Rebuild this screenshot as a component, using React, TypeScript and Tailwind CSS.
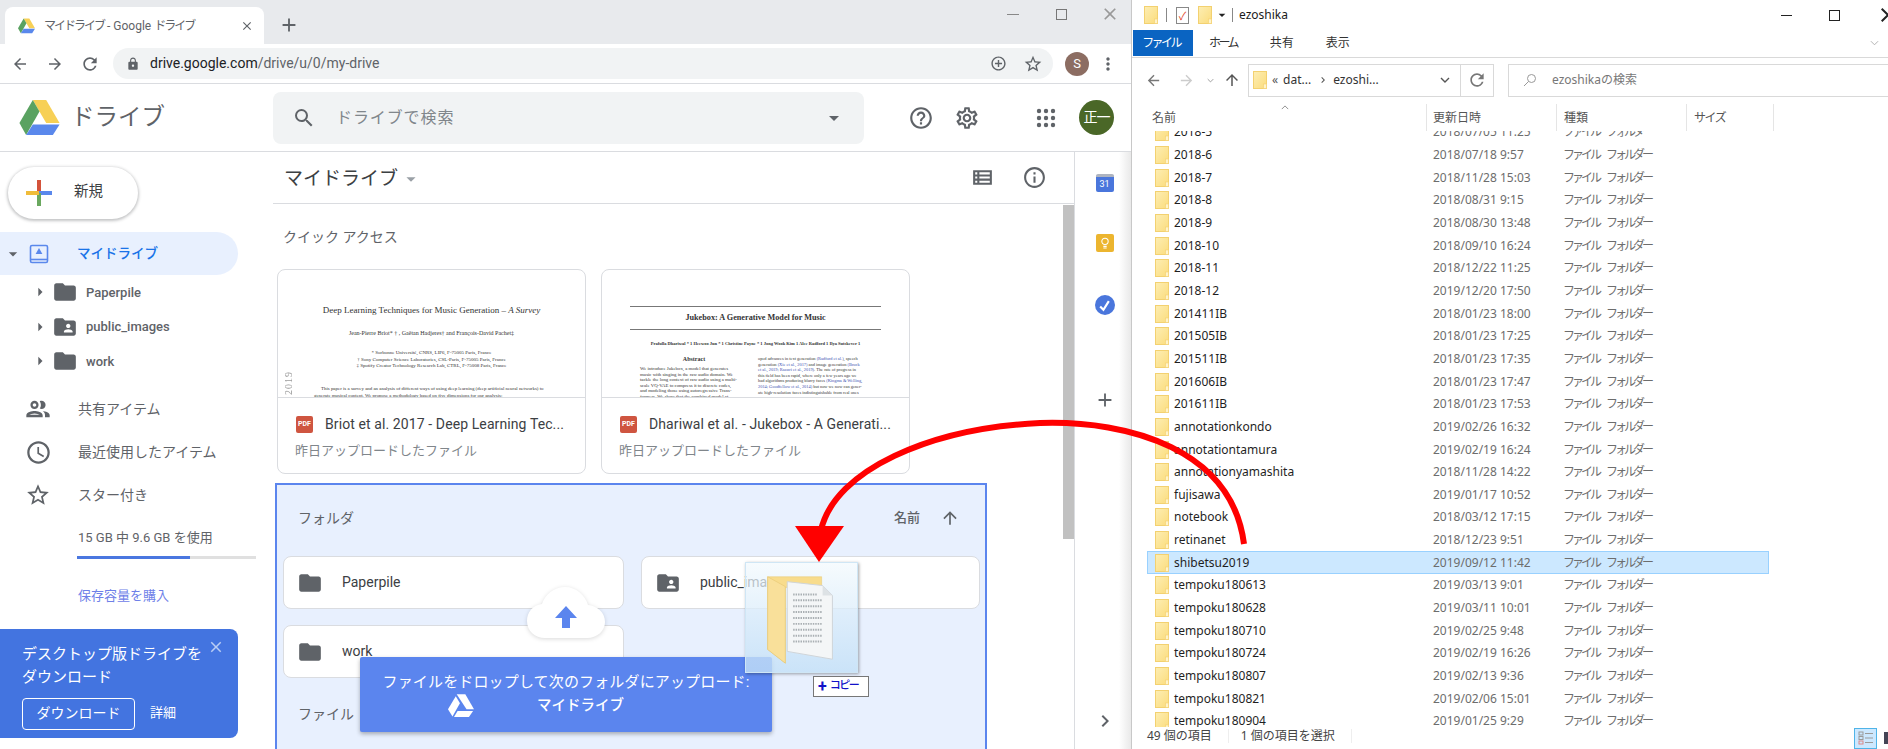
import React from "react";
import {
  MdAdd, MdAddCircleOutline, MdArrowBack, MdArrowDropDown, MdArrowForward, MdArrowRight, MdArrowUpward,
  MdClose, MdFolder, MdFolderShared, MdHelpOutline, MdInfoOutline, MdKeyboardArrowRight, MdLock, MdMoreVert, MdOutlineAccessTime,
  MdOutlinePeople, MdOutlineSettings, MdOutlineViewList, MdRefresh, MdSearch, MdStarBorder,
} from "react-icons/md";

function DriveLogo({ className = "", mono = false }: { className?: string; mono?: boolean }) {
  if (mono) {
    return (
      <svg viewBox="0 0 87 78" className={className} fill="#fff">
        <polygon points="29,0 58,0 87,50 62,50" />
        <polygon points="26,6 40,30 15,74 0,50" />
        <polygon points="32,56 84,56 70,76 20,76" />
      </svg>
    );
  }
  return (
    <svg viewBox="0 0 87 78" className={className}>
      <polygon points="29,0 58,0 87,50 58,50" fill="#f7d056" />
      <polygon points="29,0 43.5,25 14.5,76 0,50" fill="#5aa261" />
      <polygon points="29,53 87,53 72.5,76 14.5,76" fill="#5a88ec" />
    </svg>
  );
}

function PdfIcon() {
  return (
    <div className="w-[17px] h-[17px] rounded-[2px] bg-[#cf5540] flex items-center justify-center text-white text-[7px] font-bold leading-none">
      PDF
    </div>
  );
}

function Card({ children, title }: { children: React.ReactNode; title: string }) {
  return (
    <div className="w-[309px] h-[205px] bg-white border border-[#dadce0] rounded-[8px] overflow-hidden flex flex-col">
      <div className="h-[128px] border-b border-[#dadce0] overflow-hidden text-[#333] [font-family:'Liberation_Serif',serif]">{children}</div>
      <div className="flex items-center mt-[17px] pl-[18px]">
        <PdfIcon />
        <span className="ml-[12px] text-[14px] leading-[18px] text-[#3c4043] tracking-[0.1px] whitespace-nowrap">{title}</span>
      </div>
      <div className="mt-[9px] pl-[17px] text-[13px] leading-[18px] text-[#80868b]">昨日アップロードしたファイル</div>
    </div>
  );
}

function FolderCard({ name, shared, className = "" }: { name: string; shared?: boolean; className?: string }) {
  const Icon = shared ? MdFolderShared : MdFolder;
  return (
    <div className={"h-[53px] bg-white border border-[#dadce0] rounded-[8px] flex items-center pl-[13px] " + className}>
      <Icon className="text-[#5f6368] w-[26px] h-[26px]" />
      <span className="ml-[19px] text-[14px] text-[#3c4043]">{name}</span>
    </div>
  );
}

function TreeRow({ name, shared }: { name: string; shared?: boolean }) {
  const Icon = shared ? MdFolderShared : MdFolder;
  return (
    <div className="h-[34.5px] flex items-center pl-[30px]">
      <MdArrowRight className="text-[#5f6368] w-[20px] h-[20px]" />
      <Icon className="text-[#5f6368] w-[26px] h-[26px] ml-[2px]" />
      <span className="ml-[8px] text-[13px] font-medium text-[#5f6368]">{name}</span>
    </div>
  );
}

function NavRow({ icon, label }: { icon: React.ReactNode; label: string }) {
  return (
    <div className="h-[43px] flex items-center">
      <div className="w-[78px] flex justify-center pr-[2px]">{icon}</div>
      <span className="text-[14px] text-[#5f6368]">{label}</span>
    </div>
  );
}

function ExFolder() {
  return (
    <svg viewBox="0 0 14 18" className="w-[14px] h-[18px] shrink-0">
      <defs>
        <linearGradient id="exf" x1="0" y1="0" x2="1" y2="1">
          <stop offset="0" stopColor="#fdeeb4" />
          <stop offset="1" stopColor="#fbdc7c" />
        </linearGradient>
      </defs>
      <rect x="0.5" y="0.5" width="13" height="17" fill="url(#exf)" stroke="#f3d170" />
      <rect x="10.5" y="13" width="3" height="4.5" fill="#fff3c9" stroke="#f3d170" strokeWidth="0.6" />
    </svg>
  );
}

function AppsDots() {
  const pts = [3, 10, 17];
  return (
    <svg viewBox="0 0 20 20" className="w-[20px] h-[20px] ml-[56px] mr-[4px]" fill="#5f6368">
      {pts.map((y) => pts.map((x) => <circle key={`${x}-${y}`} cx={x} cy={y} r="2.2" />))}
    </svg>
  );
}

const rows: [string, string][] = [
  ["2018-5", "2018/07/05 11:25"], ["2018-6", "2018/07/18 9:57"], ["2018-7", "2018/11/28 15:03"], ["2018-8", "2018/08/31 9:15"],
  ["2018-9", "2018/08/30 13:48"], ["2018-10", "2018/09/10 16:24"], ["2018-11", "2018/12/22 11:25"], ["2018-12", "2019/12/20 17:50"],
  ["201411IB", "2018/01/23 18:00"], ["201505IB", "2018/01/23 17:25"], ["201511IB", "2018/01/23 17:35"], ["201606IB", "2018/01/23 17:47"],
  ["201611IB", "2018/01/23 17:53"], ["annotationkondo", "2019/02/26 16:32"], ["annotationtamura", "2019/02/19 16:24"],
  ["annotationyamashita", "2018/11/28 14:22"], ["fujisawa", "2019/01/17 10:52"], ["notebook", "2018/03/12 17:15"], ["retinanet", "2018/12/23 9:51"],
  ["shibetsu2019", "2019/09/12 11:42"], ["tempoku180613", "2019/03/13 9:01"], ["tempoku180628", "2019/03/11 10:01"], ["tempoku180710", "2019/02/25 9:48"],
  ["tempoku180724", "2019/02/19 16:26"], ["tempoku180807", "2019/02/13 9:36"], ["tempoku180821", "2019/02/06 15:01"], ["tempoku180904", "2019/01/25 9:29"],
];

const absLeft = [
  "We introduce Jukebox, a model that generates", "music with singing in the raw audio domain. We", "tackle the long context of raw audio using a multi-",
  "scale VQ-VAE to compress it to discrete codes,", "and modeling those using autoregressive Trans-", "formers. We show that the combined model at",
];

function Chrome() {
  return (
    <div className="w-[1131px] shrink-0 h-full flex flex-col bg-white relative overflow-hidden">
      {/* tab strip */}
      <div className="h-[44px] bg-[#e8eaed] flex items-end pl-[5px] shrink-0">
        <div className="w-[259px] h-[37px] bg-white rounded-t-[8px] flex items-center pl-[13px] relative">
          <DriveLogo className="w-[17px] h-[16px]" />
          <span className="ml-[9px] text-[12px] text-[#5f6368] whitespace-nowrap">
            <span className="tracking-[-2px]">マイドライブ</span> - Google <span className="tracking-[-2px]">ドライブ</span>
          </span>
          <MdClose className="ml-auto mr-[10px] w-[14px] h-[14px] text-[#5f6368]" />
        </div>
        <MdAdd className="ml-[14px] mb-[8px] w-[22px] h-[22px] text-[#5f6368]" />
        <div className="ml-auto self-start h-[28px] flex items-center text-[#8a8c90]">
          <div className="w-[12px] h-[1px] bg-[#888]" />
          <div className="ml-[37px] w-[11px] h-[11px] border border-[#777]" />
          <MdClose className="ml-[33px] mr-[11px] w-[20px] h-[20px] text-[#999]" />
        </div>
      </div>
      {/* toolbar */}
      <div className="h-[40px] shrink-0 flex items-center border-b border-[#dadce0] pl-[11px] pr-[10px]">
        <MdArrowBack className="w-[18px] h-[18px] text-[#5f6368]" />
        <MdArrowForward className="ml-[17px] w-[18px] h-[18px] text-[#5f6368]" />
        <MdRefresh className="ml-[16px] w-[20px] h-[20px] text-[#5f6368]" />
        <div className="ml-[13px] w-[940px] h-[31px] rounded-full bg-[#f1f3f4] flex items-center pl-[13px]">
          <MdLock className="w-[14px] h-[14px] text-[#5f6368]" />
          <span className="ml-[10px] text-[14px] text-[#202124] whitespace-nowrap">drive.google.com<span className="text-[#5f6368]">/drive/u/0/my-drive</span></span>
          <MdAddCircleOutline className="ml-auto w-[17px] h-[17px] text-[#5f6368]" />
          <MdStarBorder className="ml-[16px] mr-[10px] w-[20px] h-[20px] text-[#5f6368]" />
        </div>
        <div className="ml-[12px] w-[24px] h-[24px] rounded-full bg-[#8c6d62] text-white text-[13px] flex items-center justify-center">S</div>
        <MdMoreVert className="ml-[9px] w-[20px] h-[20px] text-[#5f6368]" />
      </div>
      {/* drive header */}
      <div className="h-[68px] shrink-0 border-b border-[#dadce0] flex items-center">
        <DriveLogo className="ml-[19px] w-[41px] h-[36px]" />
        <span className="ml-[11px] w-[94px] text-[23.5px] text-[#5f6368] leading-none whitespace-nowrap">ドライブ</span>
        <div className="ml-[108px] w-[591px] h-[52px] bg-[#f1f3f4] rounded-[8px] flex items-center pl-[19px] pr-[18px]">
          <MdSearch className="w-[24px] h-[24px] text-[#5f6368]" />
          <span className="ml-[20px] text-[16px] text-[#80868b] tracking-[0.9px]">ドライブで検索</span>
          <MdArrowDropDown className="ml-auto w-[24px] h-[24px] text-[#5f6368]" />
        </div>
        <MdHelpOutline className="ml-[44px] w-[26px] h-[26px] text-[#5f6368]" />
        <MdOutlineSettings className="ml-[20px] w-[26px] h-[26px] text-[#5f6368]" />
        <AppsDots />
        <div className="ml-[19px] w-[35px] h-[35px] shrink-0 rounded-full bg-[#4a6727] text-white text-[14px] flex items-center justify-center tracking-[-1px]">正一</div>
      </div>
      {/* body */}
      <div className="flex-1 flex min-h-0">
        <div className="w-[273px] shrink-0 flex flex-col">
          <div className="ml-[8px] mt-[15px] w-[130px] h-[52px] rounded-full bg-white shadow-[0_1px_3px_1px_rgba(60,64,67,0.3)] flex items-center pl-[18px]">
            <svg viewBox="0 0 26 26" className="w-[26px] h-[26px]">
              <rect x="11" y="0" width="4" height="13" fill="#d4533b" />
              <rect x="13" y="11" width="13" height="4" fill="#5a88ec" />
              <rect x="11" y="13" width="4" height="13" fill="#6aa85f" />
              <rect x="0" y="11" width="13" height="4" fill="#f0bc3a" />
            </svg>
            <span className="ml-[22px] mb-[2px] text-[14.5px] text-[#3c4043]">新規</span>
          </div>
          <div className="mt-[13px] w-[238px] h-[43px] rounded-r-full bg-[#e8f0fe] flex items-center pl-[3px] shrink-0">
            <MdArrowDropDown className="w-[20px] h-[20px] text-[#5f6368]" />
            <svg viewBox="0 0 20 20" className="ml-[6px] w-[20px] h-[20px]" fill="none" stroke="#5a88ec" strokeWidth="1.6">
              <rect x="1.5" y="1.5" width="17" height="17" rx="1.5" />
              <path d="M1.5 15.5h17" />
              <path d="M10 4l3.4 6H6.6z" fill="#5a88ec" stroke="none" />
            </svg>
            <span className="ml-[28px] text-[13.5px] font-medium text-[#1a73e8]">マイドライブ</span>
          </div>
          <TreeRow name="Paperpile" />
          <TreeRow name="public_images" shared />
          <TreeRow name="work" />
          <div className="mt-[9px]">
            <NavRow icon={<MdOutlinePeople className="w-[28px] h-[28px] text-[#5f6368]" />} label="共有アイテム" />
            <NavRow icon={<MdOutlineAccessTime className="w-[27px] h-[27px] text-[#5f6368]" />} label="最近使用したアイテム" />
            <NavRow icon={<MdStarBorder className="w-[26px] h-[26px] text-[#5f6368]" />} label="スター付き" />
          </div>
          <div className="pl-[78px] mt-[12px] text-[13px] leading-[18px] text-[#5f6368]">15 GB 中 9.6 GB を使用</div>
          <div className="ml-[77px] mt-[9px] w-[179px] h-[3px] bg-[#e0e0e0]">
            <div className="w-[113px] h-full bg-[#4a77e0]" />
          </div>
          <div className="pl-[78px] mt-[28px] text-[13px] leading-[18px] text-[#6e80e8]">保存容量を購入</div>
          <div className="mt-[24px] w-[238px] h-[109px] rounded-r-[8px] bg-[#4374e0] text-white pl-[22px] pt-[14px] relative">
            <div className="text-[15px] leading-[23px]">デスクトップ版ドライブを<br />ダウンロード</div>
            <div className="mt-[9px] flex items-center">
              <div className="w-[113px] h-[32px] border border-white rounded-[4px] flex items-center justify-center text-[14px]">ダウンロード</div>
              <span className="ml-[15px] mb-[2px] text-[13px]">詳細</span>
            </div>
            <MdClose className="absolute right-[13px] top-[9px] w-[18px] h-[18px] text-[#b9cdf5]" />
          </div>
        </div>
        {/* main */}
        <div className="flex-1 flex flex-col border-r border-[#dadce0] min-w-0">
          <div className="h-[52px] shrink-0 border-b border-[#dadce0] flex items-center pl-[11px]">
            <span className="pt-[3px] text-[19px] text-[#3c4043]">マイドライブ</span>
            <MdArrowDropDown className="ml-[2px] mt-[2px] w-[22px] h-[22px] text-[#9aa0a6]" />
            <MdOutlineViewList className="ml-auto w-[25px] h-[25px] text-[#5f6368]" />
            <MdInfoOutline className="ml-[27px] mr-[27px] w-[25px] h-[25px] text-[#5f6368]" />
          </div>
          <div className="flex-1 flex min-h-0">
            <div className="flex-1 min-w-0 pl-[2px] overflow-hidden">
              <div className="pl-[8px] pt-[23px] h-[65px] text-[14px] leading-[20px] text-[#5f6368]">クイック アクセス</div>
              <div className="pl-[2px] flex gap-[15px]">
                <Card title="Briot et al. 2017 - Deep Learning Tec...">
                  <div className="relative h-full">
                    <div className="pt-[34px] text-center text-[9px] leading-[12px] whitespace-nowrap">Deep Learning Techniques for Music Generation – <i>A Survey</i></div>
                    <div className="mt-[13px] text-center text-[6px] leading-[9px] whitespace-nowrap">Jean-Pierre Briot* † , Gaëtan Hadjeres† and François-David Pachet‡</div>
                    <div className="mt-[12px] text-center text-[5px] leading-[6.5px] whitespace-nowrap">
                      <div>* Sorbonne Université, CNRS, LIP6, F-75005 Paris, France</div>
                      <div>† Sony Computer Science Laboratories, CSL-Paris, F-75005 Paris, France</div>
                      <div>‡ Spotify Creator Technology Research Lab, CTRL, F-75008 Paris, France</div>
                    </div>
                    <div className="mt-[15px] pl-[36px] text-[4.9px] leading-[7px] whitespace-nowrap">
                      <div className="pl-[7px]">This paper is a survey and an analysis of different ways of using deep learning (deep artificial neural networks) to</div>
                      <div>generate musical content. We propose a methodology based on five dimensions for our analysis:</div>
                    </div>
                    <div className="absolute left-[6px] bottom-[2px] text-[#9a9a9a] text-[10px] leading-[10px] tracking-[1px] [writing-mode:vertical-rl] rotate-180">2019</div>
                  </div>
                </Card>
                <Card title="Dhariwal et al. - Jukebox - A Generati...">
                  <div className="px-[28px] pt-[36px] whitespace-nowrap">
                    <div className="border-t-[1.5px] border-b-[1.5px] border-[#777] h-[24px] flex items-center justify-center text-[8.2px] font-bold">Jukebox: A Generative Model for Music</div>
                    <div className="mt-[10px] text-center text-[4.5px] font-bold leading-[7px] -mx-[4px]">Prafulla Dhariwal * 1  Heewoo Jun * 1  Christine Payne * 1  Jong Wook Kim 1  Alec Radford 1  Ilya Sutskever 1</div>
                    <div className="mt-[9px] grid grid-cols-[118px_118px] gap-[8px] leading-[5.6px]">
                      <div className="pl-[10px] -mr-[10px] text-[4.8px]">
                        <div className="text-center font-bold text-[6px] leading-[7px] mb-[3px] pr-[10px]">Abstract</div>
                        {absLeft.map((l) => <div key={l}>{l}</div>)}
                      </div>
                      <div className="pl-[2px] text-[4.4px]">
                        <div>oped advances in text generation <span className="text-[#3b4fb0]">(Radford et al.)</span>, speech</div>
                        <div>generation <span className="text-[#3b4fb0]">(Xie et al., 2017)</span> and image generation <span className="text-[#3b4fb0]">(Brock</span></div>
                        <div><span className="text-[#3b4fb0]">et al., 2019; Razavi et al., 2019)</span>. The rate of progress in</div>
                        <div>this field has been rapid, where only a few years ago we</div>
                        <div>had algorithms producing blurry faces <span className="text-[#3b4fb0]">(Kingma &amp; Welling,</span></div>
                        <div><span className="text-[#3b4fb0]">2014; Goodfellow et al., 2014)</span> but now we now can gener-</div>
                        <div>ate high-resolution faces indistinguishable from real ones</div>
                      </div>
                    </div>
                  </div>
                </Card>
              </div>
              <div className="mt-[9px] w-[712px] h-[300px] border-2 border-[#5b85ee] bg-[#e8f0fe] px-[6px]">
                <div className="h-[71px] flex items-center pl-[15px] pr-[19px] pb-[5px]">
                  <span className="text-[14px] text-[#5f6368]">フォルダ</span>
                  <span className="ml-auto text-[13px] text-[#5f6368] font-medium">名前</span>
                  <MdArrowUpward className="ml-[20px] w-[20px] h-[20px] text-[#5f6368]" />
                </div>
                <div className="grid grid-cols-[341px_339px] gap-x-[17px] gap-y-[16px]">
                  <FolderCard name="Paperpile" />
                  <FolderCard name="public_images" shared />
                  <FolderCard name="work" />
                </div>
                <div className="pl-[15px] mt-[26px] text-[14px] text-[#5f6368]">ファイル</div>
              </div>
            </div>
            <div className="w-[11px] shrink-0">
              <div className="h-[334px] mt-[1px] bg-[#c1c1c1]" />
            </div>
          </div>
        </div>
        {/* rail */}
        <div className="w-[56px] shrink-0 flex flex-col items-center relative pl-[3px]">
          <div className="mt-[22px] w-[18px] h-[18px] rounded-[2px] bg-[#4a76dc] border-t-[3px] border-[#aeb4c0] text-white text-[9px] leading-[14px] text-center">31</div>
          <div className="mt-[42px] w-[18px] h-[18px] rounded-[2px] bg-[#ecb52f] flex items-center justify-center">
            <svg viewBox="0 0 12 14" className="w-[10px] h-[12px]" fill="none" stroke="#fff" strokeWidth="1.3">
              <circle cx="6" cy="5" r="3.8" />
              <path d="M4 11h4M4 13h4" />
            </svg>
          </div>
          <div className="mt-[43px] w-[20px] h-[20px] rounded-full bg-[#4a76dc] flex items-center justify-center">
            <svg viewBox="0 0 12 12" className="w-[13px] h-[13px]" fill="none" stroke="#fff" strokeWidth="2">
              <path d="M2 7l3 3 5-8" />
            </svg>
          </div>
          <MdAdd className="mt-[74px] w-[22px] h-[22px] text-[#5f6368]" />
          <MdKeyboardArrowRight className="mt-[298px] w-[24px] h-[24px] text-[#5f6368]" />
          <div className="absolute inset-y-0 right-0 w-[12px] bg-gradient-to-r from-transparent to-[#e9e9e9]" />
        </div>
      </div>
      {/* drop overlay */}
      <div className="absolute left-[527px] top-[587px]">
        <svg viewBox="0 0 78 52" className="w-[78px] h-[52px]" style={{ filter: "drop-shadow(0 1px 2px rgba(0,0,0,.15))" }}>
          <path d="M18 51C8 51 0 44 0 34c0-9 6-16 15-17C18 7 28 0 38 0c11 0 20 8 23 18 9 1 17 7 17 17 0 9-8 16-18 16z" fill="#fff" />
          <path d="M39 19l11 12h-7v10h-8V31h-7z" fill="#5b85ee" />
        </svg>
      </div>
      <div className="absolute left-[360px] top-[657px] w-[412px] h-[75px] bg-[#5b85ee] shadow-[0_2px_4px_rgba(0,0,0,0.3)] rounded-[2px] text-white">
        <div className="pt-[14px] text-center text-[15px] leading-[22px] tracking-[0.15px] whitespace-nowrap">ファイルをドロップして次のフォルダにアップロード:</div>
        <div className="flex items-center pl-[88px] mt-[1px]">
          <DriveLogo mono className="w-[26px] h-[24px]" />
          <span className="ml-[63px] text-[14.5px] font-medium">マイドライブ</span>
        </div>
      </div>
    </div>
  );
}

function Explorer() {
  return (
    <div className="flex-1 h-full flex flex-col bg-white border-l border-[#c8c8c8] min-w-0 overflow-hidden [font-family:'Noto_Sans','Noto_Sans_CJK_JP',sans-serif] text-[12px]">
      <div className="h-[30px] shrink-0 flex items-center pl-[12px]">
        <ExFolder />
        <div className="ml-[8px] w-[1px] h-[14px] bg-[#888]" />
        <div className="ml-[9px] w-[13px] h-[17px] border border-[#888] bg-white flex items-center justify-center text-[#e2452b] text-[11px] leading-none">✓</div>
        <div className="ml-[9px]"><ExFolder /></div>
        <MdArrowDropDown className="ml-[2px] w-[16px] h-[16px] text-[#222]" />
        <div className="ml-[2px] w-[1px] h-[14px] bg-[#888]" />
        <span className="ml-[6px] text-[#1a1a1a]">ezoshika</span>
        <div className="ml-auto w-[11px] h-[1px] bg-[#222]" />
        <div className="ml-[37px] w-[11px] h-[11px] border border-[#222]" />
        <MdClose className="ml-[36px] -mr-[12px] w-[24px] h-[24px] text-[#222]" />
      </div>
      <div className="h-[28px] shrink-0 flex items-stretch border-b border-[#d9d9d9] tracking-[-2.6px] text-[#333]">
        <div className="ml-[1px] w-[60px] h-[26px] bg-[#0a64c2] text-white flex items-center justify-center pr-[4px]">ファイル</div>
        <span className="ml-[16px] leading-[26px]">ホーム</span>
        <span className="ml-[33px] leading-[26px] tracking-[0px]">共有</span>
        <span className="ml-[32px] leading-[26px] tracking-[0px]">表示</span>
        <svg viewBox="0 0 10 6" className="ml-auto mr-[9px] mt-[10px] w-[9px] h-[6px]" fill="none" stroke="#aaa"><path d="M1 1l4 4 4-4" /></svg>
      </div>
      <div className="h-[44px] shrink-0 flex items-center pl-[13px]">
        <MdArrowBack className="w-[17px] h-[17px] text-[#777]" />
        <MdArrowForward className="ml-[16px] w-[17px] h-[17px] text-[#ccc]" />
        <svg viewBox="0 0 10 6" className="ml-[12px] w-[7px] h-[5px]" fill="none" stroke="#777"><path d="M1 1l4 4 4-4" /></svg>
        <MdArrowUpward className="ml-[9px] w-[18px] h-[18px] text-[#555]" />
        <div className="ml-[7px] w-[246px] h-[33px] border border-[#d9d9d9] flex items-center pl-[4px]">
          <ExFolder />
          <span className="ml-[5px] text-[#555]">«</span>
          <span className="ml-[5px] text-[#333]">dat...</span>
          <MdKeyboardArrowRight className="ml-[6px] w-[12px] h-[12px] text-[#555]" />
          <span className="ml-[4px] text-[#333]">ezoshi...</span>
          <svg viewBox="0 0 10 6" className="ml-auto w-[10px] h-[6px]" fill="none" stroke="#555" strokeWidth="1.4"><path d="M1 1l4 4 4-4" /></svg>
          <div className="ml-[10px] w-[1px] h-full bg-[#d9d9d9]" />
          <MdRefresh className="ml-[6px] mr-[6px] w-[20px] h-[20px] text-[#777]" />
        </div>
        <div className="ml-[14px] flex-1 h-[33px] border border-[#d9d9d9] border-r-0 flex items-center pl-[14px] text-[#777]">
          <svg viewBox="0 0 14 14" className="w-[14px] h-[14px]" fill="none" stroke="#999"><circle cx="8.5" cy="5.5" r="4" /><path d="M5.5 8.5L1 13" /></svg>
          <span className="ml-[15px]">ezoshikaの検索</span>
        </div>
      </div>
      <div className="h-[29px] shrink-0 flex items-end text-[#555] relative z-10 bg-white">
        <div className="w-[295px] h-[27px] pl-[20px] border-r border-[#e5e5e5] flex items-center relative">
          名前
          <svg viewBox="0 0 10 6" className="absolute right-[137px] top-[1px] w-[8px] h-[5px]" fill="none" stroke="#777"><path d="M1 5l4-4 4 4" /></svg>
        </div>
        <div className="w-[130px] h-[27px] pl-[6px] border-r border-[#e5e5e5] flex items-center">更新日時</div>
        <div className="w-[130px] h-[27px] pl-[7px] border-r border-[#e5e5e5] flex items-center">種類</div>
        <div className="w-[87px] h-[27px] pl-[7px] border-r border-[#e5e5e5] flex items-center tracking-[-1.5px]">サイズ</div>
      </div>
      <div className="h-[596px] shrink-0 overflow-hidden">
        <div className="-mt-[10px] pl-[15px]">
          {rows.map(([n, d]) => {
            const sel = n === "shibetsu2019";
            return (
              <div key={n} className={"w-[622px] h-[22.67px] flex items-center pl-[7px] border " + (sel ? "bg-[#cce8ff] border-[#99d1ff]" : "border-transparent")}>
                <ExFolder />
                <span className="ml-[5px] w-[259px] text-[#1f1f1f]">{n}</span>
                <span className="w-[130px] text-[#6d6d6d]">{d}</span>
                <span className="text-[#6d6d6d] tracking-[-3px] [word-spacing:7px]">ファイル フォルダー</span>
              </div>
            );
          })}
        </div>
      </div>
      <div className="flex-1 flex items-center pl-[15px] pb-[4px] text-[#444] relative">
        <span>49 個の項目</span>
        <span className="ml-[16px] w-[1px] h-[14px] bg-[#eee]" />
        <span className="ml-[12px]">1 個の項目を選択</span>
        <span className="ml-[16px] w-[1px] h-[14px] bg-[#eee]" />
        <div className="ml-auto mr-[7px] w-[23px] h-[21px] -mb-[4px] bg-[#cce8ff] border border-[#4fb4e8] flex items-center justify-center">
          <svg viewBox="0 0 16 14" className="w-[16px] h-[14px]" fill="none" stroke="#9a9a9a"><rect x="1" y="1" width="4" height="3" /><rect x="1" y="5.5" width="4" height="3" /><rect x="1" y="10" width="4" height="3" stroke="#d88" /><path d="M7 2.5h8M7 7h8M7 11.5h8" /></svg>
        </div>
        <div className="w-[4px] h-[12px] -mb-[4px] bg-[#445]" />
      </div>
    </div>
  );
}

export default function App() {
  return (
    <div className="relative w-[1888px] h-[749px] overflow-hidden flex bg-white [font-family:Roboto,'Noto_Sans_CJK_JP',sans-serif]">
      <Chrome />
      <Explorer />
      {/* drag ghost */}
      <div className="absolute left-[745px] top-[562px] w-[113px] h-[111px] bg-gradient-to-b from-[#f2f9fd]/70 to-[#c3e0f7]/80 border border-[#cfe6f5] shadow-[1px_1px_3px_rgba(0,0,0,0.35)]">
        <svg viewBox="0 0 113 111" className="w-full h-full">
          <polygon points="22,14 77,14 77,25 40,25 40,102 22,88" fill="#f8dc8c" stroke="#e8c66e" strokeWidth="0.5" />
          <polygon points="42,19 78,23 88,33 88,98 42,90" fill="#f4f6f7" stroke="#cfd4d8" />
          <polygon points="40,24 40,102 22,88 22,14" fill="#f9e09a" stroke="#e3c26a" strokeWidth="0.5" />
          <polygon points="78,23 88,33 78,33" fill="#dde2e5" />
          <path d="M48 32h24M48 38h30M48 44h30M48 50h30M48 56h30M48 62h30M48 68h30M48 74h30M48 80h30" stroke="#a9afb3" strokeWidth="2" strokeDasharray="1.5 1" />
        </svg>
      </div>
      <div className="absolute left-[813px] top-[676px] w-[56px] h-[21px] bg-white border border-[#777] flex items-center pl-[4px] text-[#1212c8] text-[11px] font-medium tracking-[-1.5px]">
        <span className="text-[16px] leading-none font-bold mr-[3px] tracking-normal">+</span>コピー
      </div>
      {/* red annotation arrow */}
      <svg className="absolute inset-0 pointer-events-none" width="1888" height="749" viewBox="0 0 1888 749">
        <path d="M1244 544C1232 450 1130 420 1040 423C930 428 835 470 821 530" fill="none" stroke="#ff0000" strokeWidth="6" />
        <polygon points="795,526 844,526 819,562" fill="#ff0000" />
      </svg>
    </div>
  );
}
